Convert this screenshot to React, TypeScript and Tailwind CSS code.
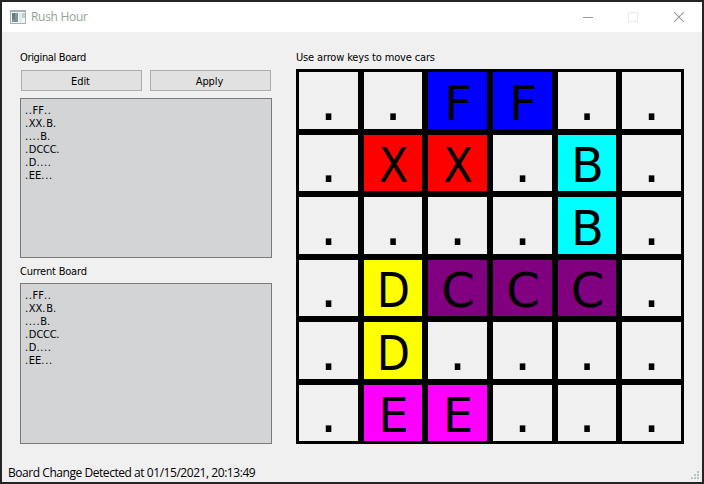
import React from "react";

const BOARD = ["..FF..", ".XX.B.", "....B.", ".DCCC.", ".D....", ".EE..."];

const CAR_COLORS: Record<string, string> = {
  ".": "bg-[#f0f0f0]",
  F: "bg-[#0000ff]",
  X: "bg-[#ff0000]",
  B: "bg-[#00ffff]",
  D: "bg-[#ffff00]",
  C: "bg-[#800080]",
  E: "bg-[#ff00ff]",
};

const NARROW = "text-[48px] [font-stretch:condensed] font-['DejaVu_Sans_Condensed','DejaVu_Sans',sans-serif]";
const WIDE = "text-[48px] [font-stretch:normal] font-['DejaVu_Sans',sans-serif]";

const GLYPH_STYLES: Record<string, string> = {
  ".": "text-[54px] [font-stretch:normal] font-['DejaVu_Sans',sans-serif]",
  F: WIDE,
  B: WIDE,
  E: WIDE,
  C: WIDE,
  D: NARROW,
  X: NARROW,
};

const LETTER_SPACING: Record<string, string> = {
  ".": "tracking-[0.65px]",
  C: "tracking-[-0.3px]",
};

function TitleBar() {
  return (
    <header className="flex h-[30px] shrink-0 items-center bg-white pl-2">
      <svg width="16" height="14" viewBox="0 0 16 14" shapeRendering="crispEdges">
        <rect width="16" height="14" fill="#a5b1b1" />
        <rect x="1" y="2" width="14" height="11" fill="#f4f6f6" />
        <rect x="2" y="3" width="6" height="9" fill="#7f9595" />
        <rect x="2" y="3" width="3" height="6" fill="#687c82" />
        <rect x="9" y="3" width="3" height="9" fill="#e3e8e8" />
        <rect x="12" y="3" width="3" height="5" fill="#b9d2d2" />
      </svg>
      <h1 className="ml-[5px] font-['Open_Sans',sans-serif] text-[12px] leading-4 tracking-[-0.3px] [font-stretch:normal] text-[#93a393]">
        Rush Hour
      </h1>
      <div className="ml-auto flex items-center pr-[17px]">
        <svg width="102" height="10" viewBox="0 0 102 10" fill="none">
          <path d="M0 5.5H10" stroke="#999" />
          <path d="M45.5.5h9v9h-9z" stroke="#eaeaea" />
          <path d="M91.2.2l9.6 9.6M100.8.2l-9.6 9.6" stroke="#999" strokeWidth="1.1" />
        </svg>
      </div>
    </header>
  );
}

function PushButton({ children }: { children: React.ReactNode }) {
  return (
    <button className="flex h-[21px] w-[121px] items-center justify-center border border-[#adadad] bg-[#e1e1e1] pt-px pr-[2px] text-[11px] leading-[13px] tracking-[-0.1px]">
      {children}
    </button>
  );
}

function BoardText({ className }: { className: string }) {
  return (
    <div className={"w-[252px] border border-[#7a7a7a] bg-[#d2d4d5] px-1 pt-[5px] leading-[13px] " + className}>
      {BOARD.map((row, i) => (
        <div key={i} className="h-[13px]">
          {row.split("").map((ch, j) => (
            <span key={j} className={LETTER_SPACING[ch] ?? ""}>{ch}</span>
          ))}
        </div>
      ))}
    </div>
  );
}

function Grid() {
  return (
    <div className="grid h-[375px] w-[388px] grid-cols-[59px_58px_59px_59px_58px_59px] grid-rows-[57px_56px_57px_56px_57px_56px] gap-[6px] bg-black p-[3px]">
      {BOARD.flatMap((row, r) =>
        row.split("").map((ch, c) => (
          <div
            key={`${r}-${c}`}
            className={
              "flex items-start justify-center leading-[52px] " +
              (ch === "."
                ? r % 2 ? "pt-[3px] " : "pt-[4px] "
                : r % 2 ? "pt-[4px] pl-px " : "pt-[5px] pl-px ") +
              CAR_COLORS[ch]
            }
          >
            <span className={GLYPH_STYLES[ch]}>{ch}</span>
          </div>
        ))
      )}
    </div>
  );
}

export default function App() {
  return (
    <div className="h-[484px] w-[704px] overflow-hidden bg-[#242426] pt-[2px] pl-[2px] font-['DejaVu_Sans_Condensed','DejaVu_Sans',sans-serif] text-[11px] text-black [font-stretch:condensed]">
      <div className="flex h-[480px] w-[700px] flex-col bg-[#f0f0f0]">
        <TitleBar />
        <main className="flex h-[430px] shrink-0 pt-[18px] pl-[18px]">
          <section className="w-[276px]">
            <div className="h-5 pt-px leading-[14px] tracking-[-0.35px]">Original Board</div>
            <div className="flex gap-2 pl-px">
              <PushButton>Edit</PushButton>
              <PushButton>Apply</PushButton>
            </div>
            <BoardText className="mt-[7px] h-[160px]" />
            <div className="mt-[6px] h-[19px] pt-px leading-[14px] tracking-[-0.2px]">Current Board</div>
            <BoardText className="h-[161px]" />
          </section>
          <section>
            <div className="h-[19px] pt-px leading-[14px] tracking-[-0.15px]">Use arrow keys to move cars</div>
            <Grid />
          </section>
        </main>
        <footer className="flex h-5 items-center justify-between pl-[6px] font-['Open_Sans',sans-serif] text-[12px] leading-4 [font-stretch:normal]">
          <span className="pt-[2px] tracking-[-0.45px]">Board Change Detected at 01/15/2021, 20:13:49</span>
          <svg className="mt-[6px] mr-[3px]" width="8" height="8" fill="#b5c4c2" shapeRendering="crispEdges">
            <path d="M6 0h2v2H6zM3 3h2v2H3zM6 3h2v2H6zM0 6h2v2H0zM3 6h2v2H3zM6 6h2v2H6z" />
          </svg>
        </footer>
      </div>
    </div>
  );
}
